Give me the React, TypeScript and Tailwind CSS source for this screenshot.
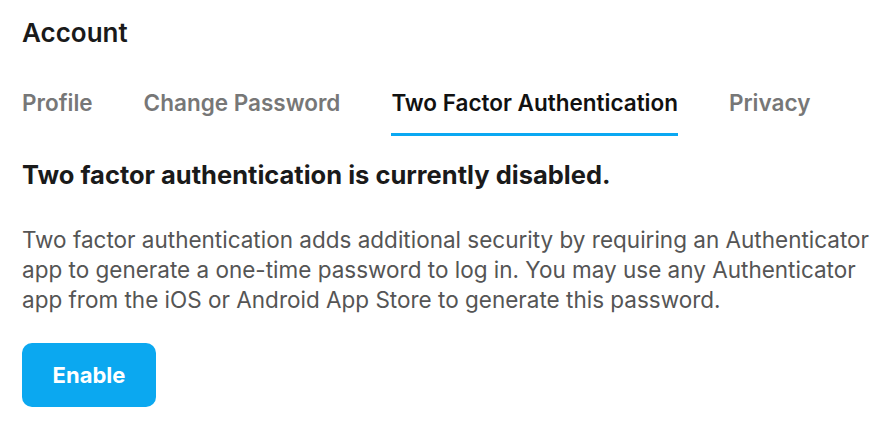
import React, { useState } from "react";

const tabs = ["Profile", "Change Password", "Two Factor Authentication", "Privacy"];

export default function App() {
  const [active, setActive] = useState("Two Factor Authentication");

  return (
    <div className="min-h-screen bg-white pl-[22px] pr-[12px] pt-[16px] font-['Inter',sans-serif]">
      <h1 className="text-[26px] leading-[34px] font-semibold text-[#1a1a1a]">Account</h1>

      <nav className="mt-[38px] flex gap-[51px]">
        {tabs.map((tab) => (
          <button
            key={tab}
            onClick={() => setActive(tab)}
            className={
              tab === active
                ? "border-b-[3px] border-[#0aa8f2] pb-[15px] text-[22.5px] leading-[30px] font-semibold text-[#111]"
                : "border-b-[3px] border-transparent pb-[15px] text-[22.5px] leading-[30px] font-semibold text-[#777]"
            }
          >
            {tab}
          </button>
        ))}
      </nav>

      <h2 className="mt-[23px] text-[25.5px] leading-[32px] font-bold text-[#1a1a1a]">
        Two factor authentication is currently disabled.
      </h2>

      <p className="mt-[34px] text-[22.5px] leading-[30px] text-[#555]">
        Two factor authentication adds additional security by requiring an Authenticator app to generate a
        one-time password to log in. You may use any Authenticator app from the iOS or Android App Store to
        generate this password.
      </p>

      <button className="mt-[28px] h-[64px] w-[134px] rounded-[10px] bg-[#0ba8f0] text-[22px] font-bold text-white">
        Enable
      </button>
    </div>
  );
}
